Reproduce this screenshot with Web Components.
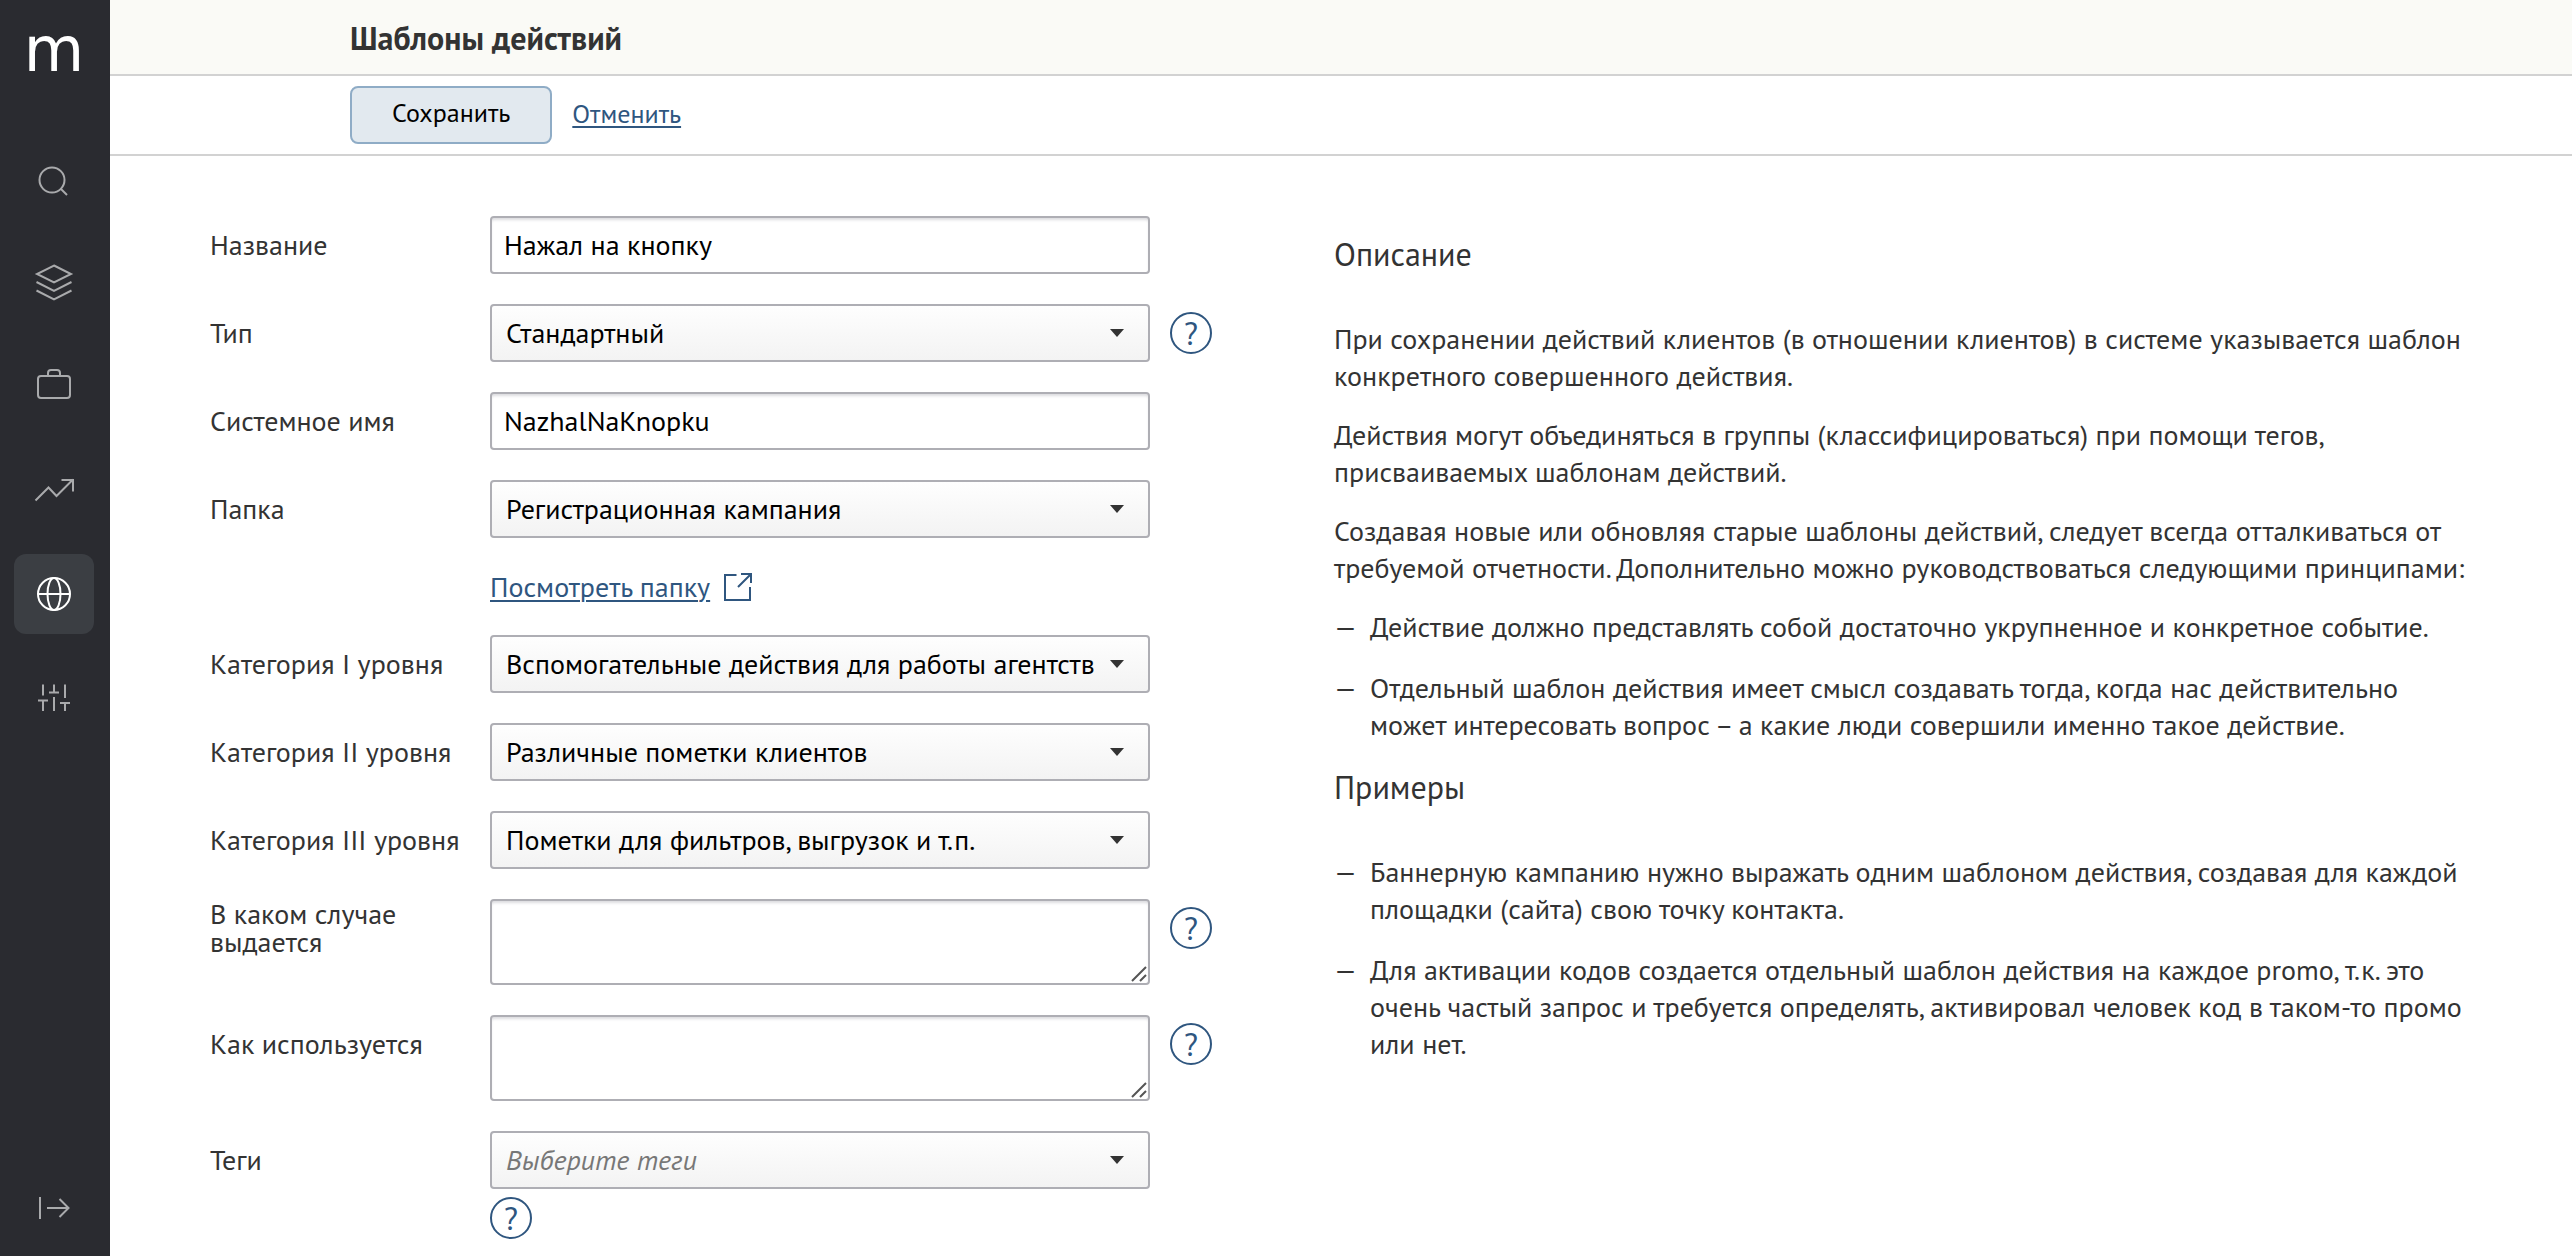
<!DOCTYPE html>
<html lang="ru">
<head>
<meta charset="utf-8">
<title>Шаблоны действий</title>
<style>
html, body { height: 100%; }
body {
  margin: 0;
  font: 28px/36px "PT Sans", "Noto Sans", sans-serif;
  color: #333;
  background: #fff;
  --link: #2f567f;
  --line: #d2d2d2;
  --field-border: #aeaeb4;
  --field-height: 58px;
}
</style>
</head>
<body>

<app-shell>
  <side-bar slot="side"></side-bar>
  <page-header slot="head">Шаблоны действий</page-header>
  <action-bar slot="actions"></action-bar>

  <template-form slot="form">
    <form-field kind="text" label="Название" value="Нажал на кнопку"></form-field>
    <form-field kind="select" label="Тип" value="Стандартный" help></form-field>
    <form-field kind="text" label="Системное имя" value="NazhalNaKnopku"></form-field>
    <form-field kind="select" label="Папка" value="Регистрационная кампания"></form-field>
    <folder-link>Посмотреть папку</folder-link>
    <form-field kind="select" label="Категория I уровня" value="Вспомогательные действия для работы агентств"></form-field>
    <form-field kind="select" label="Категория II уровня" value="Различные пометки клиентов"></form-field>
    <form-field kind="select" label="Категория III уровня" value="Пометки для фильтров, выгрузок и т.п."></form-field>
    <form-field kind="area" label="В каком случае выдается" help></form-field>
    <form-field kind="area" label="Как используется" help></form-field>
    <form-field kind="select" label="Теги" value="Выберите теги" empty help="below"></form-field>
  </template-form>

  <help-text slot="info">
    <help-title>Описание</help-title>
    <help-para>При сохранении действий клиентов (в отношении клиентов) в системе указывается шаблон конкретного совершенного действия.</help-para>
    <help-para>Действия могут объединяться в группы (классифицироваться) при помощи тегов, присваиваемых шаблонам действий.</help-para>
    <help-para>Создавая новые или обновляя старые шаблоны действий, следует всегда отталкиваться от требуемой отчетности. Дополнительно можно руководствоваться следующими принципами:</help-para>
    <help-item>Действие должно представлять собой достаточно укрупненное и конкретное событие.</help-item>
    <help-item>Отдельный шаблон действия имеет смысл создавать тогда, когда нас действительно может интересовать вопрос – а какие люди совершили именно такое действие.</help-item>
    <help-title>Примеры</help-title>
    <help-item>Баннерную кампанию нужно выражать одним шаблоном действия, создавая для каждой площадки (сайта) свою точку контакта.</help-item>
    <help-item>Для активации кодов создается отдельный шаблон действия на каждое promo, т.к. это очень частый запрос и требуется определять, активировал человек код в таком-то промо или нет.</help-item>
  </help-text>
</app-shell>

<script>
const define = (name, render) => customElements.define(name, class extends HTMLElement {
  connectedCallback() {
    if (this.shadowRoot) return;
    this.attachShadow({ mode: 'open' }).innerHTML = render(this);
  }
});

define('app-shell', () => `
<style>
  :host { display: flex; min-height: 100%; }
  main { flex: 1; min-width: 0; }
  .columns {
    display: grid;
    grid-template-columns: minmax(0, 501fr) minmax(0, 570fr);
    column-gap: 122px;
    padding: 60px 98px 16px 100px;
  }
</style>
<slot name="side"></slot>
<main>
  <slot name="head"></slot>
  <slot name="actions"></slot>
  <div class="columns"><slot name="form"></slot><slot name="info"></slot></div>
</main>`);

define('side-bar', () => {
  const items = [
    ['Поиск', '<circle cx="38" cy="38" r="12.5"/><path d="M46.500 46.500 53 53"/>'],
    ['Данные', '<path d="M40 20.500 57 29 40 37.500 23 29ZM22.500 37 40 46 57.500 37M22.500 45.500 40 54.500 57.500 45.500"/>'],
    ['Кампании', '<rect x="24" y="28" width="32" height="22" rx="3"/><path d="M34 28V25Q34 22 37 22H43Q46 22 46 25V28"/>'],
    ['Отчеты', '<path d="M21.500 49.500 34.500 36.500 42.500 45 59 28.500M47.500 29H59V40.500"/>'],
    ['Интеграции', '<circle cx="40" cy="40" r="16"/><ellipse cx="40" cy="40" rx="6.500" ry="16"/><path d="M24 40H56"/>'],
    ['Настройки', '<path d="M29 27.500V38.500M29 44V54M24 43.500H34M40 27.500V35M40 40V54M35 35.500H45M51 27.500V41M51 46.500V54M46 46H56"/>']
  ];
  return `
<style>
  :host { display: flex; flex-direction: column; align-items: center; box-sizing: border-box;
    width: 110px; padding: 14px 2px 8px 0; background: #2a2b30; }
  .logo { font: 62px/72px "DejaVu Sans", sans-serif; height: 80px; color: #fff; text-decoration: none; }
  nav { display: flex; flex-direction: column; gap: 23px; margin: 48px 0 auto; }
  nav a, button { display: block; width: 80px; height: 80px; border-radius: 12px; color: #a9aaac; }
  nav a[aria-current] { background: #3b3e43; color: #fff; }
  button { padding: 0; border: 0; background: none; }
  svg { display: block; fill: none; stroke: currentColor; stroke-width: 2; }
</style>
<a class="logo" href="#">m</a>
<nav>${items.map(([name, art], i) => `<a href="#" aria-label="${name}"${i === 4 ? ' aria-current="page"' : ''}><svg width="80" height="80">${art}</svg></a>`).join('')}</nav>
<button type="button" aria-label="Развернуть меню"><svg width="80" height="80"><path d="M26 29V51M33 40H54M45.500 31 54.500 40 45.500 49"/></svg></button>`;
});

define('page-header', () => `
<style>
  :host { display: block; border-bottom: 2px solid var(--line); background: #fafaf6; }
  h1 { margin: 0; padding: 19px 240px 17px; font-size: 32px; line-height: 38px; font-weight: 700; }
</style>
<h1><slot></slot></h1>`);

define('action-bar', () => `
<style>
  :host { display: flex; align-items: center; gap: 20px; padding: 10px 240px; border-bottom: 2px solid var(--line); }
  button { box-sizing: border-box; height: 58px; padding: 0 40px 4px; border: 2px solid #8facc6; border-radius: 8px;
    background: #e2e9ef; color: #000; font: inherit; font-size: 26px; }
  a { padding-bottom: 2px; color: var(--link); font-size: 26px; text-underline-offset: 3px; text-decoration-thickness: 2px; }
</style>
<button type="button">Сохранить</button>
<a href="#">Отменить</a>`);

define('template-form', () => `
<style>
  :host { display: block; }
  form { display: flex; flex-direction: column; gap: 30px; }
</style>
<form><slot></slot></form>`);

define('help-button', () => `
<style>
  :host { display: block; flex: none; }
  button { display: block; box-sizing: border-box; width: 42px; height: 42px; padding: 0; border: 2px solid var(--link);
    border-radius: 50%; background: none; color: var(--link); font: inherit; font-size: 32px; line-height: 38px; }
</style>
<button type="button">?</button>`);

define('folder-link', () => `
<style>
  :host { display: block; padding-left: 280px; }
  a { display: inline-flex; align-items: center; gap: 14px; height: 37px; color: var(--link); text-decoration: none; }
  span { text-decoration: underline 2px; text-underline-offset: 3px; }
  svg { display: block; fill: none; stroke: currentColor; stroke-width: 2; }
</style>
<a href="#"><span><slot></slot></span><svg width="28" height="28"><path d="M12.500 2H1V27H26V14M14 14 26 2M17 1H27V10"/></svg></a>`);

define('form-field', el => {
  const kind = el.getAttribute('kind');
  const value = el.getAttribute('value') || '';
  const help = el.getAttribute('help');
  const controls = {
    text: `<input id="control" type="text" value="${value}">`,
    select: `<select id="control"><option>${value}</option></select><svg class="arrow" width="14" height="8"><path d="M0 0H14L7 8Z"/></svg>`,
    area: `<textarea id="control"></textarea><svg class="grip" width="16" height="16"><path d="M1 15 15 1M9 15 15 9"/></svg>`
  };
  return `
<style>
  :host { display: flex; align-items: flex-start; }
  .name { display: flex; align-items: center; flex: none; box-sizing: border-box; width: 280px; min-height: var(--field-height);
    padding-right: 20px; line-height: 28px; }
  .side { display: flex; flex: 1; min-width: 0; gap: 20px; padding-right: ${help === '' ? 0 : 62}px; }
  .side.below { flex-direction: column; gap: 8px; }
  .box { display: grid; flex: 1; min-width: 0; }
  .box > * { grid-area: 1 / 1; }
  help-button { margin-top: ${help === '' ? 8 : 0}px; }
  input, select, textarea { box-sizing: border-box; width: 100%; height: var(--field-height); margin: 0; padding: 0 12px 2px;
    border: 2px solid var(--field-border); border-radius: 4px; background: #fff; color: #000; font: inherit; line-height: 36px; }
  input, textarea { box-shadow: inset 0 3px 3px -1px #dcdcdf; }
  select { appearance: none; padding: 0 50px 0 14px; background: linear-gradient(#fefefe, #f3f3f3); }
  textarea { display: block; height: 86px; resize: none; }
  :host([empty]) select { font-style: italic; color: #777; }
  svg { pointer-events: none; }
  .arrow { place-self: center end; margin-right: 26px; fill: #333; }
  .grip { place-self: end; margin: 0 3px 3px 0; fill: none; stroke: #555; stroke-width: 2; }
</style>
<label class="name" for="control">${el.getAttribute('label')}</label>
<div class="side ${help || ''}"><div class="box">${controls[kind]}</div>${help !== null ? '<help-button></help-button>' : ''}</div>`;
});

define('help-text', () => `
<style>:host { display: block; line-height: 37px; }</style>
<slot></slot>`);

define('help-title', () => `
<style>
  :host { display: block; }
  h2 { margin: 18px 0 46px; font-size: 32px; line-height: 40px; font-weight: 400; }
</style>
<h2><slot></slot></h2>`);

define('help-para', () => `
<style>
  :host { display: block; }
  p { margin: 0 0 22px; }
</style>
<p><slot></slot></p>`);

define('help-item', () => `
<style>
  :host { display: flex; margin-bottom: 24px; }
  .dash { flex: none; width: 36px; }
</style>
<span class="dash">—</span><span><slot></slot></span>`);
</script>
</body>
</html>
